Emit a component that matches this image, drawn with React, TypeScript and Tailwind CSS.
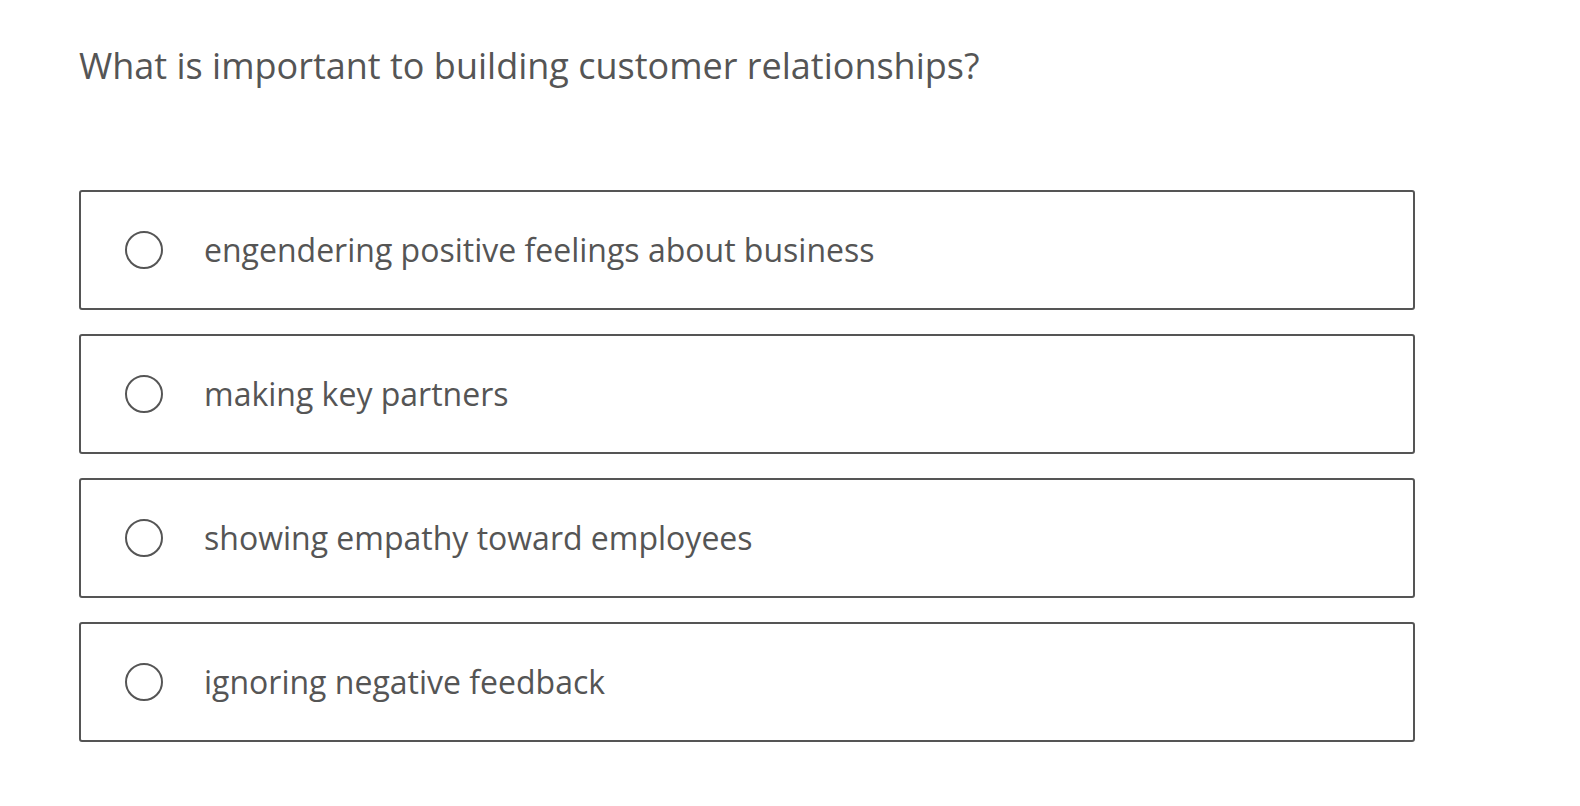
import React from "react";

const options = [
  "engendering positive feelings about business",
  "making key partners",
  "showing empathy toward employees",
  "ignoring negative feedback",
];

export default function App() {
  return (
    <div
      className="min-h-screen bg-white pl-[79px] pt-[42px]"
      style={{ fontFamily: '"Open Sans", sans-serif' }}
    >
      <h1 className="text-[36px] leading-[48px] text-[#555555] font-normal">
        What is important to building customer relationships?
      </h1>
      <div className="mt-[100px] flex w-[1336px] flex-col gap-[24px]">
        {options.map((o) => (
          <label
            key={o}
            className="flex h-[120px] cursor-pointer items-center rounded-[3px] border-2 border-[#555555] pl-[44px]"
          >
            <span className="h-[38px] w-[38px] shrink-0 rounded-full border-2 border-[#555555]" />
            <span className="ml-[41px] text-[32px] leading-[44px] text-[#555555]">
              {o}
            </span>
          </label>
        ))}
      </div>
    </div>
  );
}
